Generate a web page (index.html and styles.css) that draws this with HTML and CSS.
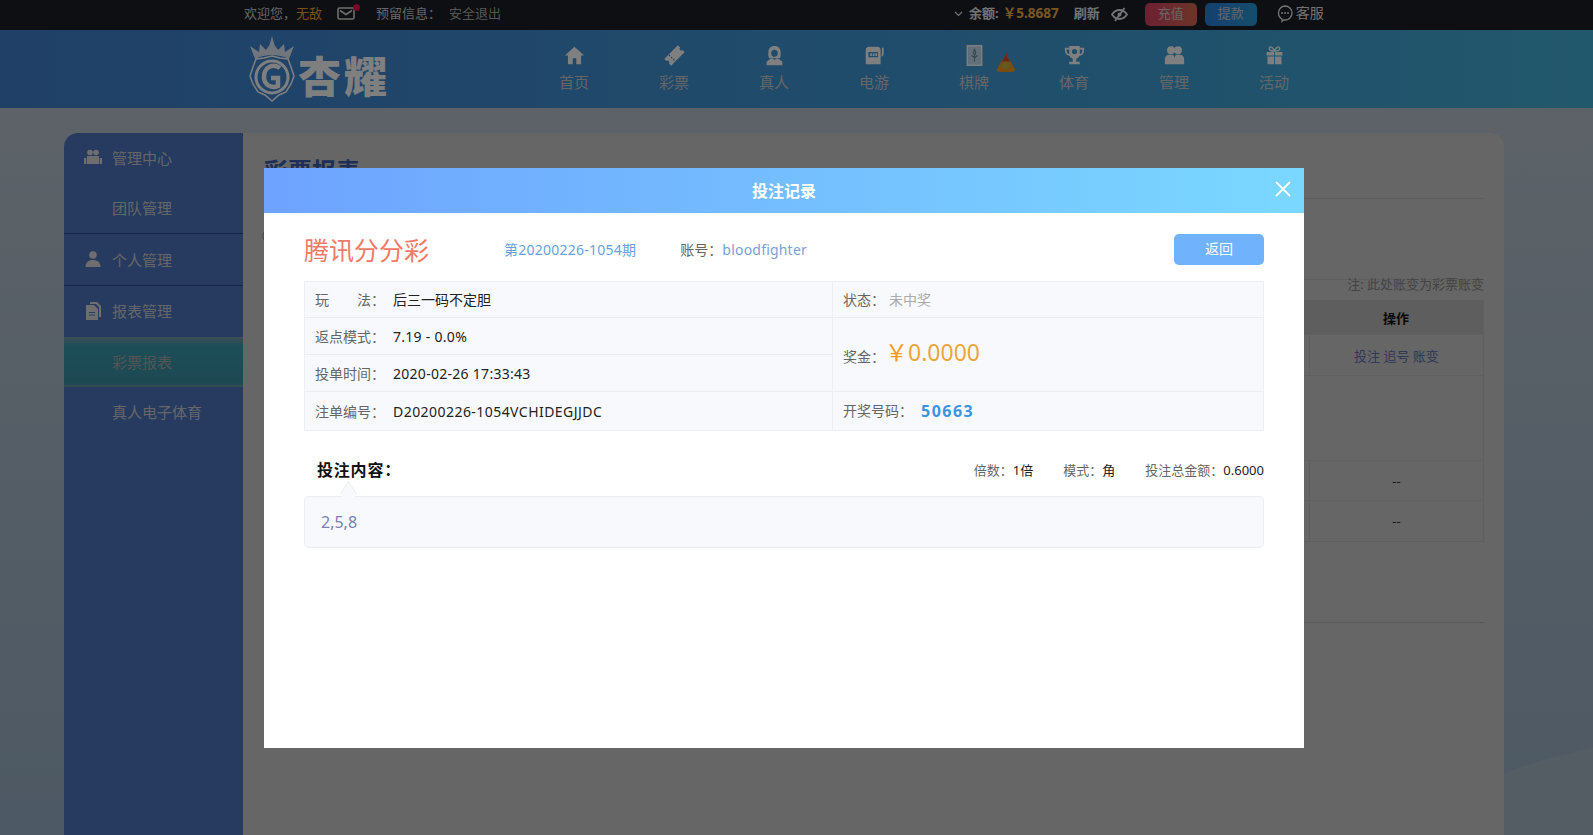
FILE: index.html
```html
<!DOCTYPE html>
<html lang="zh-CN">
<head>
  <meta charset="UTF-8">
  <title>杏耀</title>
  <link rel="stylesheet" href="styles.css">
</head>
<body>
  <!-- 顶部信息条 -->
  <div class="topbar">
    <div class="top-left">
      <span>欢迎您，<em class="user-name">无敌</em></span>
      <span class="mail">
        <svg width="18" height="13" viewBox="0 0 18 13"><rect x="1" y="1" width="16" height="11" rx="1.5" fill="none" stroke="currentColor" stroke-width="1.6"/><path d="M3 3.5l6 4 6-4" fill="none" stroke="currentColor" stroke-width="1.6"/></svg>
        <i class="mail-dot"></i>
      </span>
      <span class="reserve">预留信息：</span>
      <a class="logout">安全退出</a>
    </div>
    <div class="top-right">
      <svg class="chevron" width="9" height="6" viewBox="0 0 9 6"><path d="M1 1l3.5 3.5L8 1" fill="none" stroke="currentColor" stroke-width="1.2"/></svg>
      <b>余额:</b>
      <b class="balance">￥5.8687</b>
      <b class="refresh">刷新</b>
      <svg class="eye" width="17" height="15" viewBox="0 0 17 15"><path d="M1 7.500C3 4.500 5.500 3 8.500 3s5.500 1.500 7.500 4.500C14 10.500 11.500 12 8.500 12S3 10.500 1 7.500z" fill="none" stroke="currentColor" stroke-width="1.800"/><circle cx="8.500" cy="7.500" r="2" fill="currentColor"/><path d="M13.500 1L4 14" stroke="currentColor" stroke-width="1.800"/></svg>
      <a class="btn-top btn-red">充值</a>
      <a class="btn-top btn-blue">提款</a>
      <span class="service">
        <svg width="16" height="18" viewBox="0 0 16 18"><path d="M8 1a7 7 0 0 1 0 14c-.500 0-1 0-1.500-.100L5 16.500V14A7 7 0 0 1 8 1z" fill="none" stroke="currentColor" stroke-width="1.300"/><circle cx="5" cy="8" r="1" fill="currentColor"/><circle cx="8" cy="8" r="1" fill="currentColor"/><circle cx="11" cy="8" r="1" fill="currentColor"/></svg>
        客服
      </span>
    </div>
  </div>

  <!-- 导航 -->
  <div class="header">
    <div class="logo">
      <svg width="50" height="66" viewBox="0 0 50 66">
        <path d="M25 0l2.500 9 3.500 5 6-6 1 8 9-6-5 13c-5-3-12-4-17-4s-12 1-17 4L3 10l9 6 1-8 6 6 3.500-5z" fill="currentColor" opacity=".85"/>
        <path d="M25 20l8 2 8 1 3 8 3 9-3 8-5 8-7 3-7 6-7-6-7-3-5-8-3-8 3-9 3-8 8-1z" fill="none" stroke="currentColor" stroke-width="1.500"/>
        <circle cx="25" cy="41" r="16" fill="none" stroke="currentColor" stroke-width="3"/>
        <path d="M33 32c-7-5-16-1-16 9 0 8 8 12 14 9V42h-7" fill="none" stroke="currentColor" stroke-width="4.500"/>
      </svg>
      <span class="logo-text">杏耀</span>
    </div>
    <div class="nav">
      <a class="nav-item">
        <svg class="nav-icon" viewBox="0 0 24 24"><path d="M12 2L1 12h3.500v10h5.500v-7h4v7h5.500V12H23z"/></svg>
        首页
      </a>
      <a class="nav-item">
        <svg class="nav-icon" viewBox="0 0 24 24"><g transform="rotate(-45 12 12)"><path d="M1 6.500h22V10a2 2 0 0 0 0 4v3.500H1V14a2 2 0 0 0 0-4z"/><path d="M8 7v10" stroke="#3e82e0" stroke-width="1.200" stroke-dasharray="2 1.500"/></g></svg>
        彩票
      </a>
      <a class="nav-item">
        <svg class="nav-icon" viewBox="0 0 24 24"><path d="M12 1c4.500 0 7 3 7 7 0 3 .500 5-1 7H6c-1.500-2-1-4-1-7 0-4 2.500-7 7-7zm0 4.500c-2.500 0-3.800 1.500-3.800 3.800S9.500 13.500 12 13.500s3.800-2 3.800-4.200S14.500 5.500 12 5.500z" fill-rule="evenodd"/><path d="M7 16l2.500-1L12 17l2.500-2 2.500 1 4 3v4H3v-4z"/></svg>
        真人
      </a>
      <a class="nav-item">
        <svg class="nav-icon" viewBox="0 0 24 24"><path d="M6 2h9a4 4 0 0 1 4 4v16H2V6a4 4 0 0 1 4-4zm-1 6v6h11V8z" fill-rule="evenodd"/><path d="M7 9.500h2v3H7zm3 0h2v3h-2zm3 0h2v3h-2z"/><path d="M20.500 3h2v7c0 1.500-1 3-2.500 3v-2c.500 0 .500-.500.500-1z"/></svg>
        电游
      </a>
      <a class="nav-item">
        <span class="nav-icons">
          <svg class="nav-icon" viewBox="0 0 24 24"><path d="M3 0h18v24H3zm2 2v20h14V2z" fill-rule="evenodd"/><rect x="5" y="2" width="14" height="20" opacity=".7"/><path d="M12 5l1.500 3.500L12 12l-1.500-3.500zM12 10v9M8.500 12l3.500 2.500 3.500-2.500" fill="none" stroke="#7a8a9a" stroke-width="1.300"/></svg>
          <svg class="flame" width="18" height="19" viewBox="0 0 18 19"><path d="M9 0c1 5 9 14 9 17 0 2-4 2-9 2s-9 0-9-2C0 14 8 5 9 0z" fill="#f59a1c"/><path d="M9 0c.500 3 2.500 6 4 8.500H5C6.500 6 8.500 3 9 0z" fill="#e2452c"/><path d="M9 8c1.500 1 4.500 3.500 4.500 6 0 1.500-2 2-4.500 2s-4.500-.500-4.500-2c0-2.500 3-5 4.500-6z" fill="#c9b43c"/></svg>
        </span>
        棋牌
      </a>
      <a class="nav-item">
        <svg class="nav-icon" viewBox="0 0 24 24"><path d="M6 1h12v2h5v3c0 4-2 6-5.500 6.500-.800 1.500-2 2.500-3.500 3V19h4v3H6v-3h4v-3.500c-1.500-.500-2.700-1.500-3.500-3C3 12 1 10 1 6V3h5zM3 5v1c0 2.500 1 4 3 4.500V5zm18 0h-3v5.500c2-.500 3-2 3-4.500zM12 4.500a3 3 0 1 0 0 6 3 3 0 0 0 0-6z" fill-rule="evenodd"/></svg>
        体育
      </a>
      <a class="nav-item">
        <svg class="nav-icon" viewBox="0 0 24 24"><circle cx="8" cy="6" r="4.500"/><circle cx="16" cy="6" r="4.500"/><path d="M1 22v-6c0-3 2-5 5-5h3c2 0 3 2 3 4 0-2 1-4 3-4h3c3 0 5 2 5 5v6z"/></svg>
        管理
      </a>
      <a class="nav-item">
        <svg class="nav-icon" viewBox="0 0 24 24"><path d="M3 8h8.500v4H3zm9.500 0H21v4h-8.500zM4 13h7.500v9H4zm8.500 0H20v9h-7.500z"/><path d="M12 7C10 7 6 6.500 6 4s4-3 6 3zm0 0c2 0 6-.500 6-3s-4-3-6 3z" fill="none" stroke="currentColor" stroke-width="1.500"/></svg>
        活动
      </a>
    </div>
  </div>

  <!-- 主体 -->
  <div class="page">
    <div class="card">
      <div class="sidebar">
        <div class="side-group side-first">
          <div class="side-item">
            <svg class="side-icon" viewBox="0 0 18 16"><circle cx="6" cy="3.500" r="2.800"/><circle cx="12" cy="3.500" r="2.800"/><path d="M3 7h12v8H3zM0 9h2.300v6H0zm15.700 0H18v6h-2.300z"/></svg>
            管理中心
          </div>
          <div class="side-item">团队管理</div>
        </div>
        <div class="side-group">
          <div class="side-item side-head">
            <svg class="side-icon" viewBox="0 0 18 16"><circle cx="9" cy="4" r="3.800"/><path d="M1.500 16c0-4.500 3-7 7.500-7s7.500 2.500 7.500 7z"/></svg>
            个人管理
          </div>
        </div>
        <div class="side-group side-last">
          <div class="side-item side-head">
            <svg class="side-icon" viewBox="0 0 18 18"><path d="M6 0h7l4 4v11h-2V5l-3-3H6z"/><path d="M2 3h8l4 4v11H2zm3 7v1h6v-1zm0 2.500v1h6v-1z" fill-rule="evenodd"/></svg>
            报表管理
          </div>
          <div class="side-item active">彩票报表</div>
          <div class="side-item">真人电子体育</div>
        </div>
      </div>

      <div class="content">
        <h1 class="content-title">彩票报表</h1>
        <div class="filter-row">
          <span class="filter-mark">○</span>
        </div>
        <div class="note">注: 此处账变为彩票账变</div>
        <div class="report">
          <div class="report-row report-head"><span class="report-op">操作</span></div>
          <div class="report-row report-first"><span class="report-op links">投注 追号 账变</span></div>
          <div class="report-row report-empty"><span class="report-op"></span></div>
          <div class="report-row"><span class="report-op">--</span></div>
          <div class="report-row"><span class="report-op">--</span></div>
        </div>
        <div class="content-foot"></div>
      </div>
    </div>
  </div>

  <div class="overlay"></div>

  <!-- 投注记录弹窗 -->
  <div class="modal">
    <div class="modal-head">
      投注记录
      <svg class="modal-close" width="16" height="16" viewBox="0 0 16 16"><path d="M1 1l14 14M15 1L1 15" stroke="#fff" stroke-width="1.800"/></svg>
    </div>
    <div class="modal-body">
      <div class="bet-title">
        <span class="game-name">腾讯分分彩</span>
        <span class="issue">第20200226-1054期</span>
        <span class="account">账号：<a>bloodfighter</a></span>
        <a class="btn-back">返回</a>
      </div>

      <table class="bet-table">
        <tr class="row-a">
          <td class="cell-left"><span class="label">玩　　法：</span>后三一码不定胆</td>
          <td><span class="label-r">状态：</span><span class="status">未中奖</span></td>
        </tr>
        <tr class="row-b">
          <td class="cell-left"><span class="label">返点模式：</span><span class="num">7.19 - 0.0%</span></td>
          <td rowspan="2" class="cell-prize"><span class="label-r">奖金：</span><span class="prize"><i>￥</i>0.0000</span></td>
        </tr>
        <tr class="row-b">
          <td class="cell-left"><span class="label">投单时间：</span><span class="num">2020-02-26 17:33:43</span></td>
        </tr>
        <tr class="row-c">
          <td class="cell-left"><span class="label">注单编号：</span><span class="num order-no">D20200226-1054VCHIDEGJJDC</span></td>
          <td><span class="label-r label-wide">开奖号码：</span><b class="winning">50663</b></td>
        </tr>
      </table>

      <div class="bet-info">
        <h3>投注内容：</h3>
        <div class="bet-meta">
          <span>倍数：<b>1倍</b></span>
          <span>模式：<b>角</b></span>
          <span>投注总金额：<b>0.6000</b></span>
        </div>
      </div>
      <div class="bet-box">2,5,8</div>
    </div>
  </div>
</body>
</html>
```

FILE: styles.css
```css
/* 全局 */
* {
  box-sizing: border-box;
}

html, body {
  height: 100%;
}

body {
  margin: 0;
  overflow: hidden;
  font-family: "Noto Sans", "Noto Sans CJK SC", sans-serif;
  font-size: 14px;
  color: #333;
  /* 右下角的弧形装饰 + 底色 */
  background:
    radial-gradient(ellipse 400px 136px at 1800px 864px, #a8bac8 99.5%, transparent 100%),
    linear-gradient(180deg, #bec8d2, #9ab2c8);
}

/* 顶部 */
.topbar {
  height: 30px;
  background: #1c1e26;
  display: flex;
  align-items: center;
  padding: 0 0 6px 244px;
  font-size: 13px;
  color: #ccc;
}

.top-left {
  display: flex;
  align-items: center;
}

.user-name {
  color: #f0a030;
  font-style: normal;
}

.mail {
  position: relative;
  display: flex;
  margin-left: 15px;
  margin-top: 3px;
  color: #ddd;
}

.mail-dot {
  position: absolute;
  right: -5px;
  top: -3px;
  width: 7px;
  height: 7px;
  border-radius: 50%;
  background: #e8104a;
}

.reserve {
  margin-left: 21px;
}

.logout {
  margin-left: 8px;
  color: #aaa;
}

.top-right {
  display: flex;
  align-items: center;
  margin-left: 453px;
  color: #e6e6e6;
}

.chevron {
  margin-right: 6px;
  margin-top: 3px;
}

.balance {
  margin-left: 4px;
  font-size: 13.500px;
  color: #f0b040;
}

.refresh {
  margin-left: 15px;
}

.eye {
  margin-left: 11px;
  margin-top: 4px;
}

.btn-top {
  width: 52px;
  height: 23px;
  line-height: 21px;
  margin-top: 4px;
  text-align: center;
  border-radius: 5px;
  color: #ccc;
}

.btn-red {
  margin-left: 17px;
  background: linear-gradient(90deg, #d84068, #d86a50);
}

.btn-blue {
  margin-left: 8px;
  background: linear-gradient(90deg, #2a80e0, #2a9ad8);
}

.service {
  margin-left: 20px;
  display: flex;
  align-items: center;
  gap: 3px;
  font-size: 14px;
}

.service svg {
  margin-top: 4px;
}

/* 导航 */
.header {
  height: 78px;
  background: linear-gradient(90deg, #4080d0, #40a0d8 70%, #44b0d8);
  display: flex;
  padding-left: 247px;
  color: #fff;
}

.logo {
  width: 277px;
  display: flex;
  align-items: flex-end;
  gap: 1px;
  padding-bottom: 6px;
}

.logo-text {
  font-size: 43px;
  line-height: 50px;
  font-weight: 900;
  letter-spacing: 3px;
}

.nav {
  display: flex;
}

.nav-item {
  width: 100px;
  padding-top: 15px;
  display: flex;
  flex-direction: column;
  align-items: center;
  font-size: 15px;
  line-height: 22px;
  color: #ccc;
}

.nav-icon {
  display: block;
  width: 21px;
  height: 21px;
  margin-bottom: 5px;
  fill: #fff;
  color: #fff;
}

.nav-icons {
  position: relative;
  display: flex;
}

.flame {
  position: absolute;
  left: 33px;
  top: 8px;
}

/* 主体 */
.page {
  padding: 25px 89px 0 64px;
  height: calc(100% - 108px);
}

.card {
  height: 100%;
  display: flex;
  position: relative;
  z-index: 1;
  background: #ccc;
  border-radius: 14px 14px 0 0;
  overflow: hidden;
}

.sidebar {
  width: 179px;
  flex-shrink: 0;
  background: #4e76c2;
}

.side-group {
  border-bottom: 1px solid #2d4f96;
}

.side-group:last-child {
  border-bottom: 0;
}

.side-item {
  height: 50px;
  display: flex;
  align-items: center;
  padding-left: 48px;
  position: relative;
  font-size: 15px;
  color: #ccc;
}

.side-first .side-item, .side-last .side-item {
  padding-bottom: 2px;
}

.side-head {
  height: 51px;
}

.side-item.active {
  background: linear-gradient(180deg, #7c9eaa, #3a9cb0 18%, #3a92a4 92%, #6c9aa8);
  color: #aaa;
}

.side-icon {
  position: absolute;
  left: 20px;
  top: 50%;
  width: 18px;
  height: 18px;
  margin-top: -10px;
  fill: #ddd;
}

/* 报表内容 */
.content {
  flex: 1;
  padding: 20px 20px 0 21px;
}

.content-title {
  margin: 0;
  height: 46px;
  font-size: 24px;
  line-height: 36px;
  color: #3a5cb0;
  border-bottom: 1px solid #bdbdbd;
}

.filter-row {
  height: 81px;
  padding-top: 26px;
  border-bottom: 1px solid #bdbdbd;
}

.filter-mark {
  margin-left: -2px;
  color: #555;
}

.note {
  height: 20px;
  margin-top: -5px;
  margin-bottom: 5px;
  text-align: right;
  font-size: 13px;
  color: #888;
  line-height: 18px;
}

.report {
  border-bottom: 1px solid #bfbfbf;
  border-right: 1px solid #c0c0c0;
}

.report-row {
  height: 40px;
  display: flex;
  justify-content: flex-end;
  border-bottom: 1px solid #c0c0c0;
}

.report-row:last-child {
  border-bottom: 0;
}

.report-head {
  height: 35px;
  background: #bcbcbc;
}

.report-first {
  height: 41px;
}

.report-empty {
  height: 85px;
}

.report-op {
  width: 174px;
  display: flex;
  align-items: center;
  justify-content: center;
  font-size: 13px;
  color: #333;
  border-left: 1px solid #c0c0c0;
}

.report-head .report-op {
  font-weight: bold;
  border-left: 0;
  color: #111;
}

.report-empty .report-op {
  border-left: 0;
}

.report-op.links {
  color: #6070b0;
}

.content-foot {
  height: 81px;
  border-bottom: 1px solid #b4b4b4;
}

/* 遮罩与弹窗 */
.overlay {
  position: fixed;
  inset: 0;
  z-index: 2;
  background: rgba(0, 0, 0, 0.5);
}

.modal {
  position: fixed;
  left: 264px;
  top: 168px;
  z-index: 3;
  width: 1040px;
  height: 580px;
  background: #fff;
}

.modal-head {
  height: 45px;
  line-height: 46px;
  position: relative;
  text-align: center;
  font-size: 16px;
  font-weight: bold;
  color: #fff;
  background: linear-gradient(90deg, #6ea3ff, #7ad8ff);
}

.modal-close {
  position: absolute;
  right: 13px;
  top: 13px;
}

.modal-body {
  padding: 0 40px;
}

.bet-title {
  height: 68px;
  padding-top: 4px;
  display: flex;
  align-items: center;
}

.game-name {
  width: 200px;
  font-size: 25px;
  color: #f07a68;
}

.issue {
  letter-spacing: .25px;
  color: #6a9fdc;
}

.account {
  margin-left: 44px;
  color: #666;
}

.account a {
  letter-spacing: .2px;
  color: #7a9fd8;
}

.btn-back {
  margin-left: auto;
  width: 90px;
  height: 31px;
  line-height: 30px;
  text-align: center;
  border-radius: 5px;
  color: #fff;
  background: #70b2fb;
}

.bet-table {
  width: 960px;
  border-collapse: collapse;
  table-layout: fixed;
  background: #f8f9fc;
}

.bet-table td {
  border: 1px solid #eceef3;
  padding: 0 0 0 10px;
  color: #222;
}

.bet-table .row-a td {
  padding-bottom: 2px;
}

.bet-table .cell-prize {
  padding-bottom: 3px;
}

.cell-left {
  width: 528px;
}

.row-a {
  height: 36px;
}

.row-b {
  height: 37px;
}

.row-c {
  height: 39px;
}

.label {
  display: inline-block;
  width: 78px;
  color: #666;
}

.num {
  letter-spacing: .28px;
}

.order-no {
  letter-spacing: .45px;
}

.label-r {
  color: #666;
}

.label-wide {
  display: inline-block;
  width: 78px;
}

.status {
  margin-left: 4px;
  color: #aaa;
}

.prize {
  font-size: 23px;
  line-height: 24px;
  color: #eaa63c;
  vertical-align: 1px;
}

.prize i {
  font-style: normal;
  color: #f59a1c;
}

.winning {
  font-size: 16px;
  letter-spacing: 1.500px;
  vertical-align: -1px;
  color: #3a94e0;
}

.bet-info {
  height: 65px;
  display: flex;
  align-items: center;
  justify-content: space-between;
  padding: 11px 0 0 13px;
}

.bet-info h3 {
  margin: 0;
  font-size: 16px;
  letter-spacing: .8px;
  color: #111;
}

.bet-meta {
  display: flex;
  gap: 30px;
  font-size: 13px;
  color: #666;
}

.bet-meta b {
  font-weight: normal;
  color: #222;
}

.bet-box {
  position: relative;
  height: 52px;
  line-height: 50px;
  padding-left: 16px;
  font-size: 16px;
  color: #7a7fb5;
  background: #f8f9fc;
  border: 1px solid #eceef3;
  border-radius: 5px;
}

/* 小三角 */
.bet-box::before {
  content: "";
  position: absolute;
  left: 36px;
  top: -11px;
  width: 14px;
  height: 14px;
  background: #f8f9fc;
  border-left: 1px solid #eceef3;
  border-top: 1px solid #eceef3;
  transform: rotate(45deg) skew(12deg, 12deg);
}
```
